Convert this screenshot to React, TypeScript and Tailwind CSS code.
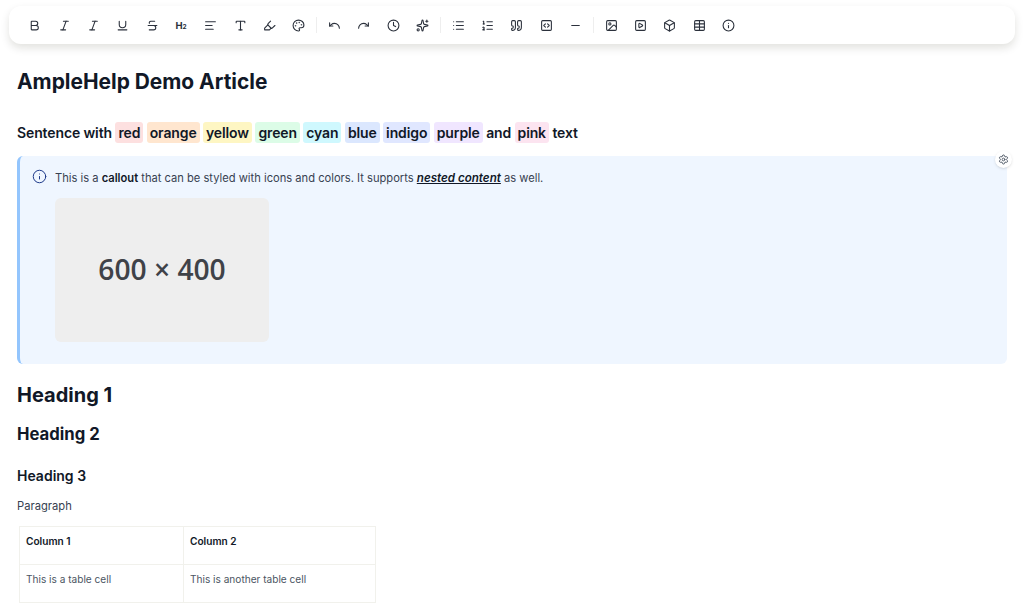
import React from "react";
import {
  Bold, Italic, Underline, Strikethrough, AlignLeft, Type, Highlighter, Palette,
  Undo, Redo, Clock, Sparkles, List, ListOrdered, Quote, SquareCode, Minus, Image, SquarePlay, Box, Table,
  Info, Settings,
} from "lucide-react";

function H2Icon() {
  return (
    <span className="-ml-[1px] mt-[1px] flex items-baseline font-['Inter',sans-serif] text-[9.5px] font-bold leading-none">
      H<span className="text-[6.5px]">2</span>
    </span>
  );
}

const groups: React.ElementType[][] = [
  [Bold, Italic, Italic, Underline, Strikethrough, H2Icon, AlignLeft, Type, Highlighter, Palette],
  [Undo, Redo, Clock, Sparkles],
  [List, ListOrdered, Quote, SquareCode, Minus],
  [Image, SquarePlay, Box, Table, Info],
];

const tags: [string, string][] = [
  ["red", "bg-[#fde0e0]"],
  ["orange", "bg-[#ffe6cf]"],
  ["yellow", "bg-[#fef6c3]"],
  ["green", "bg-[#dcfce7]"],
  ["cyan", "bg-[#cff8fe]"],
  ["blue", "bg-[#dbe7fe]"],
  ["indigo", "bg-[#e0e7ff]"],
  ["purple", "bg-[#f0e6ff]"],
];

function Tag({ label, color }: { label: string; color: string }) {
  return <span className={`${color} rounded-[3px] px-[3px] py-[2px]`}>{label}</span>;
}

export default function App() {
  return (
    <div className="h-[605px] overflow-hidden bg-white font-['Inter',sans-serif] text-[#111827]">
      <div className="px-[9px] pt-[6px]">
        <div className="flex h-[38px] items-center rounded-xl bg-white pl-[11.3px] shadow-[0_4px_9px_rgba(30,30,10,0.13)]">
          {groups.map((icons, g) => (
            <React.Fragment key={g}>
              {g > 0 && <div className="mx-[2.7px] h-[16px] w-px bg-[#eeeeee]" />}
              {icons.map((Icon, i) => (
                <div key={i} className="flex h-[28px] w-[29.33px] items-center justify-center text-[#2b313c]">
                  <Icon size={13} strokeWidth={2} />
                </div>
              ))}
            </React.Fragment>
          ))}
        </div>
      </div>

      <div className="pl-[17px] pr-[17px]">
        <h1 className="mt-[24px] text-[20.9px] font-bold leading-[28px]">AmpleHelp Demo Article</h1>
        <h3 className="mt-[25px] text-[14px] font-semibold leading-[24px] tracking-[-0.12px]">
          Sentence with{" "}
          {tags.map(([t, c]) => (
            <React.Fragment key={t}>
              <Tag label={t} color={c} />{" "}
            </React.Fragment>
          ))}
          and <Tag label="pink" color="bg-[#fce4f0]" /> text
        </h3>

        <div className="relative mt-[11px] h-[208px] w-[990px] rounded-md border-l-[3px] border-[#93c5fd] bg-[#eff6ff] pl-[35px] pt-[14px]">
          <Info size={15} strokeWidth={1.6} className="absolute left-[11.5px] top-[13px] text-[#1e3a8a]" />
          <p className="text-[11.16px] leading-[16px] text-[#374151]">
            This is a <b className="font-semibold text-[#111827]">callout</b> that can be styled with icons and colors. It supports{" "}
            <b className="text-[11.6px] font-semibold italic text-[#111827] underline">nested content</b> as well.
          </p>
          <div className="mt-[12px] flex h-[144px] w-[214px] items-center justify-center rounded-md bg-[#eeeeee] pb-[1px] font-['Open_Sans',sans-serif] text-[28.2px] font-semibold text-[#3f4248]">
            600 × 400
          </div>
          <div className="absolute -right-[5px] -top-[5px] flex h-[17px] w-[17px] items-center justify-center rounded-full bg-white text-[#4b5563] shadow-sm">
            <Settings size={11} />
          </div>
        </div>

        <h1 className="mt-[17px] text-[20px] font-bold leading-[28px]">Heading 1</h1>
        <h2 className="mt-[13px] text-[16.7px] font-bold leading-[24px]">Heading 2</h2>
        <h3 className="mt-[18px] text-[14px] font-semibold leading-[24px]">Heading 3</h3>
        <p className="mt-[10px] text-[11.2px] leading-[16px] text-[#374151]">Paragraph</p>

        <table className="ml-[2px] mt-[12px] w-[357px] table-fixed border-collapse text-[10.1px]">
          <tbody>
            <tr className="h-[38px]">
              <td className="w-[164px] border border-[#f1f1ec] px-[6px] pb-[7px] font-semibold">Column 1</td>
              <td className="border border-[#f1f1ec] px-[6px] pb-[7px] font-semibold">Column 2</td>
            </tr>
            <tr className="h-[38px] text-[#4b5563]">
              <td className="border border-[#f1f1ec] px-[6px] pb-[7px]">This is a table cell</td>
              <td className="border border-[#f1f1ec] px-[6px] pb-[7px]">This is another table cell</td>
            </tr>
          </tbody>
        </table>
      </div>
    </div>
  );
}
